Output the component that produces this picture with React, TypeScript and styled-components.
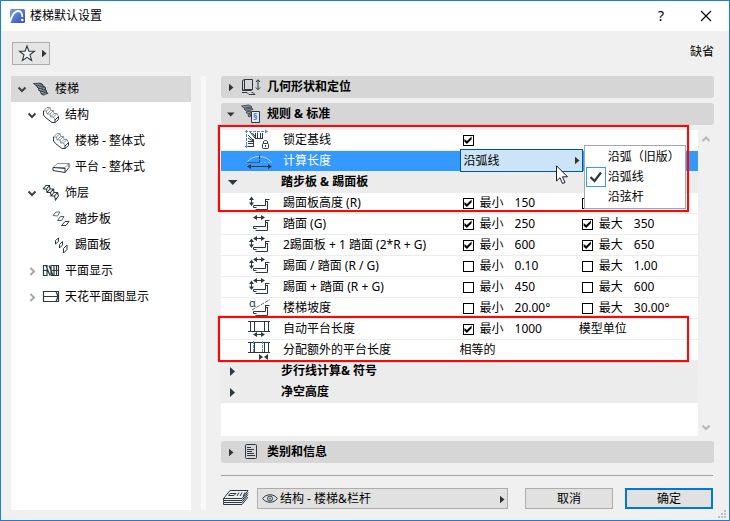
import React, { useState } from "react";
import styled, { createGlobalStyle, css } from "styled-components";

const INK = "#2b3940";
const BLUE = "#3399ff";

const GlobalStyle = createGlobalStyle`
  *, *::before, *::after { box-sizing: border-box; }
  body {
    margin: 0;
    font: 12px/20px "Noto Sans", "Noto Sans CJK SC", sans-serif;
    color: #000;
  }
  button, input, select { font: inherit; color: inherit; margin: 0; padding: 0; }
  svg { display: block; flex: none; overflow: visible; }
`;

/* ---------- window frame ---------- */

const Window = styled.div`
  position: relative;
  display: flex;
  flex-direction: column;
  min-height: 100vh;
  border: 1px solid #1a80d4;
  background: #f0f0f0;
`;

const TitleBar = styled.header`
  display: flex;
  align-items: center;
  height: 30px;
  padding: 0 16px 0 8px;
  background: #fff;
`;

const Title = styled.h1`
  flex: 1;
  margin: 0 0 0 5px;
  font-size: 12px;
  font-weight: 400;
`;

const TitleButton = styled.button`
  display: flex;
  align-items: center;
  justify-content: center;
  width: 14px;
  height: 20px;
  margin-left: 31px;
  border: 0;
  background: none;
  font-size: 14px;
`;

const Toolbar = styled.div`
  display: flex;
  align-items: flex-start;
  justify-content: space-between;
  height: 45px;
  padding: 11px 15px 0 11px;
`;

const FavoriteButton = styled.button`
  display: flex;
  align-items: center;
  justify-content: center;
  gap: 6px;
  width: 38px;
  height: 23px;
  padding-left: 6px;
  border: 1px solid #adadad;
  background: #e5e5e5;
`;

const Body = styled.div`
  flex: 1;
  display: flex;
  padding: 0 15px 10px 10px;
`;

const ResizeGrip = styled.svg`
  position: absolute;
  right: 3px;
  bottom: 2px;
`;

/* ---------- tree ---------- */

const TreePanel = styled.nav`
  flex: none;
  width: 180px;
  background: #fff;
`;

const TreeRow = styled.button<{ $level: number; $selected?: boolean }>`
  display: flex;
  align-items: center;
  gap: 5px;
  width: 100%;
  height: 26px;
  padding-left: ${(p) => 6 + p.$level * 10}px;
  border: 0;
  background: ${(p) => (p.$selected ? "#d9d9d9" : "none")};
  text-align: left;
`;

const TreeToggle = styled.span`
  flex: none;
  width: 10px;
`;

const Splitter = styled.div`
  flex: none;
  width: 5px;
  margin: 0 15px 0 10px;
  background: #f8f8f8;
`;

/* ---------- settings ---------- */

const Settings = styled.main`
  flex: 1;
  min-width: 0;
  display: flex;
  flex-direction: column;
`;

const Section = styled.button`
  flex: none;
  display: flex;
  align-items: center;
  height: 22px;
  margin-bottom: 5px;
  padding-left: 7px;
  border: 0;
  border-radius: 3px;
  background: #d6d6d6;
  font-weight: 700;
`;

const SectionIcon = styled.span`
  width: 20px;
  margin: 0 6px 0 5px;
`;

const ScrollArea = styled.div`
  flex: 1;
  display: flex;
  margin-bottom: 5px;
`;

const TableArea = styled.div`
  flex: 1;
  min-width: 0;
  background: #fff;
`;

const ScrollBar = styled.div`
  flex: none;
  display: flex;
  flex-direction: column;
  justify-content: space-between;
  align-items: center;
  width: 16px;
  padding: 4px 0 3px;
`;

const ScrollButton = styled.button`
  border: 0;
  background: none;
`;

const Table = styled.table`
  width: 100%;
  table-layout: fixed;
  border-collapse: separate;
  border-spacing: 0;
`;

const RowGroup = styled.tbody<{ $mark?: "top" | "bottom" }>`
  position: relative;
  ${(p) =>
    p.$mark &&
    css`
      &::after {
        content: "";
        position: absolute;
        left: -3px;
        right: 9px;
        top: ${p.$mark === "top" ? "-5px" : "-3px"};
        bottom: ${p.$mark === "top" ? "2px" : "-1px"};
        border: 2px solid #f50a0a;
        box-shadow: 0 0 1px #ff5050;
        pointer-events: none;
        z-index: 1;
      }
    `}
`;

const Row = styled.tr<{ $tone?: "selected" | "group" }>`
  height: 21px;
  color: ${(p) => (p.$tone === "selected" ? "#fff" : "#000")};
  background: ${(p) =>
    p.$tone === "selected" ? BLUE : p.$tone === "group" ? "#ececec" : "#fff"};
`;

const Cell = styled.td`
  position: relative;
  padding: 0;
  border-bottom: 1px solid #ededed;
`;

const GroupToggle = styled.button`
  display: flex;
  align-items: center;
  width: 100%;
  height: 20px;
  padding-left: 7px;
  border: 0;
  background: none;
  font-weight: 700;
`;

const GroupArrow = styled.span`
  width: 10px;
  margin-right: 43px;
`;

const RowLabel = styled.div`
  display: flex;
  align-items: center;
  gap: 11px;
  height: 20px;
  padding-left: 23px;
  white-space: nowrap;
`;

const Limit = styled.div`
  display: flex;
  align-items: center;
  height: 20px;
  padding-left: 3px;
`;

const LimitLabel = styled.label`
  display: flex;
  align-items: center;
  gap: 6px;
  white-space: nowrap;
`;

const CheckBox = styled.input.attrs({ type: "checkbox" })`
  appearance: none;
  flex: none;
  width: 11px;
  height: 11px;
  border: 1px solid #000;
  background: #fff;
  &:checked::before {
    content: "";
    display: block;
    width: 9px;
    height: 9px;
    background: #000;
    clip-path: polygon(10% 38%, 38% 62%, 90% 10%, 90% 42%, 38% 94%, 10% 70%);
  }
`;

const NumberField = styled.input.attrs({ type: "text" })`
  flex: 1;
  min-width: 0;
  height: 20px;
  margin-left: 11px;
  border: 0;
  background: none;
  outline: none;
`;

/* ---------- pop-up in a cell ---------- */

const CellEditor = styled.div`
  position: absolute;
  z-index: 2;
  left: 0;
  top: -2px;
  width: calc(100% + 4px);
  color: #000;
`;

const SelectBox = styled.div`
  position: relative;
  flex: 1;
  min-width: 0;
  > svg { position: absolute; top: 7px; pointer-events: none; }
  > svg:last-child { right: 1px; }
`;

const PopupSelect = styled.select<{ $active?: boolean }>`
  appearance: none;
  display: block;
  width: 100%;
  height: ${(p) => (p.$active ? 23 : 21)}px;
  padding-left: ${(p) => (p.$active ? 3 : 22)}px;
  border: 1px solid ${(p) => (p.$active ? "#00559b" : "#adadad")};
  border-radius: 0;
  background: ${(p) => (p.$active ? "#cce4f7" : "#e1e1e1")};
  outline: none;
`;

const Menu = styled.ul`
  position: absolute;
  left: calc(100% + 1px);
  top: -4px;
  margin: 0;
  padding: 1px;
  width: 102px;
  border: 1px solid #a3a7b0;
  background: #fff;
  list-style: none;
`;

const MenuItem = styled.button`
  display: flex;
  align-items: center;
  gap: 2px;
  width: 100%;
  height: 20px;
  border: 0;
  background: none;
  white-space: nowrap;
`;

const MenuCheck = styled.span<{ $on: boolean }>`
  flex: none;
  display: flex;
  align-items: center;
  justify-content: center;
  width: 20px;
  height: 20px;
  border: 1px solid ${(p) => (p.$on ? BLUE : "transparent")};
`;

const Cursor = styled.svg`
  position: absolute;
  left: 96px;
  top: 16px;
  pointer-events: none;
`;

/* ---------- footer ---------- */

const Footer = styled.footer`
  flex: none;
  display: flex;
  align-items: flex-start;
  margin: 7px 1px 0 0;
  padding: 12px 0 0 2px;
  height: 35px;
  border-top: 1px solid #a0a0a0;
`;

const LayerSelect = styled(SelectBox)`
  margin: 0 17px 0 8px;
  > svg:first-child { left: 5px; top: 5px; }
`;

const DialogButton = styled.button<{ $primary?: boolean }>`
  flex: none;
  display: flex;
  align-items: center;
  justify-content: center;
  width: 88px;
  height: 21px;
  border: ${(p) => (p.$primary ? "2px solid #0078d7" : "1px solid #adadad")};
  background: #e1e1e1;
  & + & { margin-left: 12px; }
`;

/* ---------- small drawings ---------- */

const ArrowRight = ({ large = false }) =>
  large ? (
    <svg width="10" height="9" viewBox="0 0 10 9">
      <path d="M2 0L7 4.5L2 9Z" fill={INK} />
    </svg>
  ) : (
    <svg width="8" height="9" viewBox="0 0 8 9">
      <path d="M1 .8L5.500 4.500L1 8.200Z" fill="#333" />
    </svg>
  );

const ArrowDown = ({ large = false }) =>
  large ? (
    <svg width="10" height="9" viewBox="0 0 10 9">
      <path d="M0 2H9.500L4.750 7Z" fill={INK} />
    </svg>
  ) : (
    <svg width="8" height="9" viewBox="0 0 8 9">
      <path d="M-1 2.500H6.500L2.750 6.500Z" fill="#333" />
    </svg>
  );

const Chevron = ({ dir, color = "#b8b8b8" }: { dir: "up" | "down" | "right"; color?: string }) => {
  const d = { up: "M1.5 7L5 3.500L8.500 7", down: "M1.500 3.500L5 7L8.500 3.500", right: "M3.500 2L7 5.500L3.500 9" }[dir];
  return (
    <svg width="10" height="11" viewBox="0 0 10 11">
      <path d={d} fill="none" stroke={color} strokeWidth="2" />
    </svg>
  );
};

const AppLogo = () => (
  <svg width="16" height="16" viewBox="0 0 16 16">
    <defs>
      <linearGradient id="logo" x1="0" y1="0" x2="1" y2="1">
        <stop offset="0" stopColor="#7ba0e8" />
        <stop offset="1" stopColor="#2a50b8" />
      </linearGradient>
    </defs>
    <rect x="1" y="1" width="15" height="14" rx="1.500" fill="url(#logo)" />
    <path d="M1 14C3 7 6 3 9 3C12.500 3 13.300 6 13.300 9" fill="none" stroke="#fff" strokeWidth="1.800" />
    <circle cx="13.300" cy="12" r="1.300" fill="#fff" />
  </svg>
);

const Star = () => (
  <svg width="16" height="17" viewBox="0 0 16 17">
    <path d="M8 1L9.900 6.300H15.400L11 9.800L12.600 15.500L8 12.300L3.400 15.500L5 9.800L.6 6.300H6.100Z" fill="#f2f2f2" stroke={INK} strokeWidth="1.100" />
  </svg>
);

const TreeSvg = ({ children }: { children: React.ReactNode }) => (
  <svg width="18" height="18" viewBox="0 0 18 18" fill="none" stroke={INK} strokeWidth="1">
    {children}
  </svg>
);

const StairIcon = () => (
  <TreeSvg>
    <g fill="#8b9498">
      <path d="M1.500 3.500C4 4 6 2.500 9 3.500L11 5C8 4.500 6.500 6 4 5.500Z" />
      <path d="M5 7C7.500 7.500 9 5.500 12.500 6.500L13.500 8C11 7.500 9 9 6.500 8.500Z" />
      <path d="M7 10.300C9 10.500 11 9 13.500 9.500L14.500 11C12 10.800 10.500 12 8.500 11.800Z" />
      <path d="M9 13.500C11 13.500 12.500 12 15 12.300L16 13.500C14 13.500 13 15 11 15Z" />
    </g>
    <path d="M4.500 5.500L5 7M6.500 8.500L7 10.500M8.500 11.500L9 13.500M11 5V6.500M13.500 8V9.500M14.500 11V12.500" />
  </TreeSvg>
);

const StructureIcon = () => (
  <TreeSvg>
    <path
      stroke="#89949a"
      d="M5 1.500H8L8.500 4.500H11.500L12 7.500H15L16.500 10.500M1.500 5H4.500L5 8H8L8.500 11H11.500L13 14M5 1.500L1.500 5M8 1.500L4.500 5M8.500 4.500L5 8M11.500 4.500L8 8M12 7.500L8.500 11M15 7.500L11.500 11"
    />
    <path d="M1.500 5V9L3.500 11.500L10 16.500H13L16.500 13.500V10.500L13 14V16.500" />
  </TreeSvg>
);

const LandingIcon = () => (
  <TreeSvg>
    <path stroke="#89949a" d="M1 9.500L5.500 5.500H17L13 9.500Z" />
    <path d="M1 9.500V12.500L13 14.500L17 9.500V5.500M13 10V14.500M1 9.500L13 10.500" />
  </TreeSvg>
);

const FinishIcon = () => (
  <TreeSvg>
    <path
      strokeWidth="1.100"
      d="M1 5L4 1.500H7.500L8 5H11.500L12 8.500H15.500L16.500 12M1 5H4.500L5 8.500H8.500L9 12H12.500L13.500 16L16.500 12M7.500 1.500L4.500 5M8 5L5 8.500M11.500 5L8.500 8.500M12 8.500L9 12M15.500 8.500L12.500 12"
    />
  </TreeSvg>
);

const TreadIcon = () => (
  <TreeSvg>
    <path d="M1 5.500L4 2H8L5.500 6Z" stroke="#66727a" />
    <path d="M5.500 10.500L8.500 6.500H12L9.500 10.500Z" stroke="#4b5860" />
    <path d="M9.500 15.500L13 11.500H17L14 15.500Z" />
  </TreeSvg>
);

const RiserIcon = () => (
  <TreeSvg>
    <path d="M3.500 8V4.500L6.500 2V5.500Z" />
    <path d="M7.500 12V8.500L10.500 5.500V9Z" />
    <path d="M11.500 17V12.500L15 9V13.500Z" />
  </TreeSvg>
);

const PlanIcon = () => (
  <TreeSvg>
    <g strokeWidth="1.200">
      <path d="M1.500 3V14M5 3V14M1.500 3.500H4L8 13.500M1 13.500H5M7 3.500L11 13.500M9 3V13.500M9 3.500H16.500V13.500H9M12 3V14M14.500 3V14M9 8.500H16.500M1.500 8.500H5" />
    </g>
  </TreeSvg>
);

const CeilingIcon = () => (
  <TreeSvg>
    <path strokeWidth="1.200" d="M1.500 3.500H16.500V13.500H1.500ZM1.500 8.500H16M14 3.500L16 8.500L14 13.500" />
  </TreeSvg>
);

const GeometryIcon = () => (
  <svg width="20" height="18" viewBox="0 0 20 18" fill="none" stroke={INK}>
    <path d="M3.500 1.500H11.500V11.500H3.500ZM1.500 2.500L3.500 1.500M1.500 2.500V12.500L3.500 11.500M1.500 12.500H10L11.500 11.500" />
    <path d="M1 14.500H6L8 16.500H14L12 14.500H10.500" />
    <path d="M17 2V11M15 4L17 1.700L19 4M15 9.500L17 11.800L19 9.500" />
  </svg>
);

const RulesIcon = () => (
  <svg width="20" height="20" viewBox="0 0 20 20" fill="none" stroke={INK}>
    <g fill="#8b9498" strokeWidth=".8">
      <path d="M.5 2L8 1L11 3L3 4Z" />
      <path d="M3 5L11 4L12 5.500L5 7Z" />
      <path d="M5 8L10 7V9L6.500 10Z" />
      <path d="M7 11L9.500 10.500V12.500L8 13Z" />
    </g>
    <path d="M10.500 7.500H18.500V18.500H10.500Z" fill="#e9e9e9" />
    <text x="12" y="16" fontSize="9" fontWeight="700" fill="#3385ee" stroke="none">§</text>
  </svg>
);

const InfoIcon = () => (
  <svg width="20" height="16" viewBox="0 0 20 16" fill="none" stroke={INK}>
    <rect x="4.500" y=".5" width="11" height="14" rx="1" />
    <path d="M6 3.500H10M6 5.500H13M6 7.500H11M6 9.500H13M6 11.500H14" />
  </svg>
);

const RowSvg = ({ children }: { children: React.ReactNode }) => (
  <svg width="28" height="20" viewBox="0 0 28 20" fill="none" stroke={INK}>
    {children}
  </svg>
);

const VerticalArrow = () => (
  <g>
    <path d="M7.500 6V11" />
    <path d="M5 7L7.500 3.500L10 7ZM5 9.500L7.500 13L10 9.500Z" fill={INK} stroke="none" />
  </g>
);

const HorizontalArrow = ({ y = 3.5, from = 9, to = 21 }) => (
  <g>
    <path d={`M${from + 2} ${y}H${to - 2}`} />
    <path
      d={`M${from + 4} ${y - 2.5}L${from} ${y}L${from + 4} ${y + 2.5}ZM${to - 4} ${y - 2.5}L${to} ${y}L${to - 4} ${y + 2.5}Z`}
      fill={INK}
      stroke="none"
    />
  </g>
);

const StepIcon = ({ rise = false, run = false }) => (
  <RowSvg>
    {rise && <VerticalArrow />}
    {run && <HorizontalArrow />}
    <path d="M9.500 12.500H21.500M9.500 12.500V14.500H12.500M11.500 16.500H23.500V8M21.500 12.500V7.500M21 6.500H25.500M21.500 6V8.500H24" />
  </RowSvg>
);

const SlopeIcon = () => (
  <RowSvg>
    <text x="5" y="9" fontSize="11" fill={INK} stroke="none">α</text>
    <path d="M8 12L26 1.500" stroke="#66727a" strokeDasharray="4 1" />
    <path d="M9.500 13.500H21.500M9.500 13.500V15.500H12.500M11.500 17.500H23.500V9M21.500 13.500V8.500M21.500 7.500H25.500M21.500 7V9.500H24" />
  </RowSvg>
);

const LockIcon = () => (
  <RowSvg>
    <path d="M5 1.500H23M2.500 4V15" stroke="#3c8cf0" strokeDasharray="3 1" />
    <path d="M21 -.5L24 1.500L21 3.500Z" fill="#3c8cf0" stroke="none" />
    <path d="M1 1.500h3M2.500 0v3M1 16.500h3M2.500 15v3" stroke="#3c8cf0" />
    <path d="M6 2L11 8M8.500 3L11.500 7M11.500 3V8M13.500 2.500V8M16.500 3V8M18.500 3V8M4 5L9 10M4 8L9 11M4 11.500H9M4 13.500H9M4 16.500H9M9.500 9V17M11 8.500H19" />
    <rect x="18.500" y="13.500" width="6" height="5" rx="1" fill="#fff" />
    <path d="M19.500 13.500V12C19.500 10 23.500 10 23.500 12V13.500M21.500 15V17" />
  </RowSvg>
);

const ArcIcon = () => (
  <RowSvg>
    <path d="M3 11.500C8 3.500 22 3.500 27.500 11.500" stroke="#c3d6ea" />
    <path d="M3 11.500H15" stroke="#31618f" />
    <path d="M16 11.500H27" stroke="#7cb9f5" strokeDasharray="2 2" />
    <path d="M15.500 4V8M15.500 9V12" stroke="#1c4a78" />
    <HorizontalArrow y={15.5} from={3} to={28} />
  </RowSvg>
);

const PlatformIcon = ({ extra = false }) => (
  <RowSvg>
    <path d="M4 2.500H26M4 12.500H26M6.500 2V12M10.500 2V12M20.500 2V12M24.500 2V12" />
    {extra ? (
      <g>
        <path d="M9.500 1V12M18.500 1V13" stroke="#4a98f5" strokeDasharray="3 1" />
        <path d="M15 14L19 17L15 20ZM24 14L20 17L24 20Z" fill={INK} stroke="none" />
      </g>
    ) : (
      <HorizontalArrow y={15.5} from={9} to={21} />
    )}
  </RowSvg>
);

const LayersIcon = () => (
  <svg width="26" height="18" viewBox="0 0 26 18" fill="none" stroke={INK}>
    <path d="M.5 10.500L7 2.500H25L19 10.500ZM.5 10.500V12.500H19L25 4.500M.5 13V14.500H19L25 6.500M.5 15V16.500H19L25 9" />
    <path d="M7 5.500H13L11 7.500H5.500ZM16 4.500L14 8M19 4.500L17 8M22 4.500L20 8" />
  </svg>
);

const Eye = () => (
  <svg width="16" height="11" viewBox="0 0 16 11" fill="none" stroke={INK}>
    <path d="M.7 5.500C4 .5 12 .5 15.300 5.500C12 10.500 4 10.500 .7 5.500Z" />
    <circle cx="8" cy="5.500" r="2.500" />
    <circle cx="8" cy="5.500" r=".6" />
  </svg>
);

/* ---------- data ---------- */

const tree = [
  { level: 0, open: true, label: "楼梯", Icon: StairIcon },
  { level: 1, open: true, label: "结构", Icon: StructureIcon },
  { level: 2, label: "楼梯 - 整体式", Icon: StructureIcon },
  { level: 2, label: "平台 - 整体式", Icon: LandingIcon },
  { level: 1, open: true, label: "饰层", Icon: FinishIcon },
  { level: 2, label: "踏步板", Icon: TreadIcon },
  { level: 2, label: "踢面板", Icon: RiserIcon },
  { level: 1, open: false, label: "平面显示", Icon: PlanIcon },
  { level: 1, open: false, label: "天花平面图显示", Icon: CeilingIcon },
];

type LimitData = [checked: boolean, value: string];

const limits: { label: string; icon: React.ReactNode; min: LimitData; max: LimitData }[] = [
  { label: "踏面 (G)", icon: <StepIcon run />, min: [true, "250"], max: [true, "350"] },
  { label: "2踢面板 + 1 踏面 (2*R + G)", icon: <StepIcon rise run />, min: [true, "600"], max: [true, "650"] },
  { label: "踢面 / 踏面 (R / G)", icon: <StepIcon rise run />, min: [false, "0.10"], max: [false, "1.00"] },
  { label: "踢面 + 踏面 (R + G)", icon: <StepIcon rise run />, min: [false, "450"], max: [false, "600"] },
  { label: "楼梯坡度", icon: <SlopeIcon />, min: [false, "20.00°"], max: [false, "30.00°"] },
];

const lengthModes = ["沿弧（旧版）", "沿弧线", "沿弦杆"];

/* ---------- composed parts ---------- */

const LimitField = ({ name, label, data }: { name: string; label: string; data: LimitData }) => (
  <Limit>
    <LimitLabel>
      <CheckBox defaultChecked={data[0]} />
      {label}
    </LimitLabel>
    <NumberField aria-label={`${name} ${label}`} defaultValue={data[1]} />
  </Limit>
);

const LabelCell = ({ icon, label }: { icon: React.ReactNode; label: string }) => (
  <Cell>
    <RowLabel>
      {icon}
      {label}
    </RowLabel>
  </Cell>
);

const LimitRow = ({ label, icon, min, max }: (typeof limits)[number]) => (
  <Row>
    <LabelCell icon={icon} label={label} />
    <Cell><LimitField name={label} label="最小" data={min} /></Cell>
    <Cell><LimitField name={label} label="最大" data={max} /></Cell>
  </Row>
);

const GroupRow = ({ label, open = false }: { label: string; open?: boolean }) => (
  <Row $tone="group">
    <Cell colSpan={3}>
      <GroupToggle aria-expanded={open}>
        <GroupArrow>{open ? <ArrowDown large /> : <ArrowRight large />}</GroupArrow>
        {label}
      </GroupToggle>
    </Cell>
  </Row>
);

const SectionHeader = ({ label, icon, open = false }: { label: string; icon: React.ReactNode; open?: boolean }) => (
  <Section aria-expanded={open}>
    {open ? <ArrowDown /> : <ArrowRight />}
    <SectionIcon>{icon}</SectionIcon>
    {label}
  </Section>
);

const LengthModeEditor = () => {
  const [mode, setMode] = useState(lengthModes[1]);
  return (
    <CellEditor>
      <SelectBox>
        <PopupSelect $active aria-label="计算长度" value={mode} onChange={(e) => setMode(e.target.value)}>
          {lengthModes.map((m) => <option key={m}>{m}</option>)}
        </PopupSelect>
        <ArrowRight />
      </SelectBox>
      <Menu role="menu">
        {lengthModes.map((m) => (
          <li key={m} role="none">
            <MenuItem role="menuitemradio" aria-checked={m === mode} onClick={() => setMode(m)}>
              <MenuCheck $on={m === mode}>
                {m === mode && (
                  <svg width="14" height="14" viewBox="0 0 14 14">
                    <path d="M1.500 7L5.500 11L12 2.500" fill="none" stroke={INK} strokeWidth="2.200" />
                  </svg>
                )}
              </MenuCheck>
              {m}
            </MenuItem>
          </li>
        ))}
      </Menu>
      <Cursor width="13" height="20" viewBox="0 0 13 20">
        <path d="M.5 .8V16L4 12.700L6.500 18.500L9 17.500L6.500 11.800H11.500Z" fill="#fff" stroke="#1b1b2b" />
      </Cursor>
    </CellEditor>
  );
};

export default function App() {
  return (
    <Window lang="zh-CN">
      <GlobalStyle />
      <TitleBar>
        <AppLogo />
        <Title>楼梯默认设置</Title>
        <TitleButton aria-label="帮助">?</TitleButton>
        <TitleButton aria-label="关闭">
          <svg width="12" height="12" viewBox="0 0 12 12">
            <path d="M1 1L11 11M11 1L1 11" stroke="#000" strokeWidth="1.100" />
          </svg>
        </TitleButton>
      </TitleBar>
      <Toolbar>
        <FavoriteButton aria-label="收藏夹">
          <Star />
          <ArrowRight />
        </FavoriteButton>
        <span>缺省</span>
      </Toolbar>
      <Body>
        <TreePanel>
          {tree.map(({ level, open, label, Icon }) => (
            <TreeRow key={label} $level={level} $selected={level === 0} aria-expanded={open}>
              <TreeToggle>
                {open === true && <Chevron dir="down" color="#404040" />}
                {open === false && <Chevron dir="right" color="#a6a6a6" />}
              </TreeToggle>
              <Icon />
              {label}
            </TreeRow>
          ))}
        </TreePanel>
        <Splitter />
        <Settings>
          <SectionHeader label="几何形状和定位" icon={<GeometryIcon />} />
          <SectionHeader label="规则 & 标准" icon={<RulesIcon />} open />
          <ScrollArea>
            <TableArea>
              <Table>
                <colgroup>
                  <col width="50%" />
                  <col width="25%" />
                  <col width="25%" />
                </colgroup>
                <RowGroup $mark="top">
                  <Row>
                    <LabelCell icon={<LockIcon />} label="锁定基线" />
                    <Cell colSpan={2}>
                      <Limit><CheckBox defaultChecked aria-label="锁定基线" /></Limit>
                    </Cell>
                  </Row>
                  <Row $tone="selected">
                    <LabelCell icon={<ArcIcon />} label="计算长度" />
                    <Cell><LengthModeEditor /></Cell>
                    <Cell />
                  </Row>
                  <GroupRow label="踏步板 & 踢面板" open />
                  <Row>
                    <LabelCell icon={<StepIcon rise />} label="踢面板高度 (R)" />
                    <Cell><LimitField name="踢面板高度 (R)" label="最小" data={[true, "150"]} /></Cell>
                    <Cell>
                      <Limit><CheckBox aria-label="踢面板高度 (R) 最大" /></Limit>
                    </Cell>
                  </Row>
                </RowGroup>
                <RowGroup>
                  {limits.map((row) => <LimitRow key={row.label} {...row} />)}
                </RowGroup>
                <RowGroup $mark="bottom">
                  <Row>
                    <LabelCell icon={<PlatformIcon />} label="自动平台长度" />
                    <Cell><LimitField name="自动平台长度" label="最小" data={[true, "1000"]} /></Cell>
                    <Cell>模型单位</Cell>
                  </Row>
                  <Row>
                    <LabelCell icon={<PlatformIcon extra />} label="分配额外的平台长度" />
                    <Cell colSpan={2}>相等的</Cell>
                  </Row>
                </RowGroup>
                <RowGroup>
                  <GroupRow label="步行线计算& 符号" />
                  <GroupRow label="净空高度" />
                </RowGroup>
              </Table>
            </TableArea>
            <ScrollBar>
              <ScrollButton aria-label="向上滚动"><Chevron dir="up" /></ScrollButton>
              <ScrollButton aria-label="向下滚动"><Chevron dir="down" /></ScrollButton>
            </ScrollBar>
          </ScrollArea>
          <SectionHeader label="类别和信息" icon={<InfoIcon />} />
          <Footer>
            <LayersIcon />
            <LayerSelect>
              <Eye />
              <PopupSelect aria-label="图层">
                <option>结构 - 楼梯&栏杆</option>
              </PopupSelect>
              <ArrowRight />
            </LayerSelect>
            <DialogButton>取消</DialogButton>
            <DialogButton $primary>确定</DialogButton>
          </Footer>
        </Settings>
      </Body>
      <ResizeGrip width="8" height="8" viewBox="0 0 8 8" fill="#bdbdbd">
        <path d="M6 0h2v2h-2zM3 3h2v2h-2zM6 3h2v2h-2zM0 6h2v2h-2zM3 6h2v2h-2zM6 6h2v2h-2z" />
      </ResizeGrip>
    </Window>
  );
}
